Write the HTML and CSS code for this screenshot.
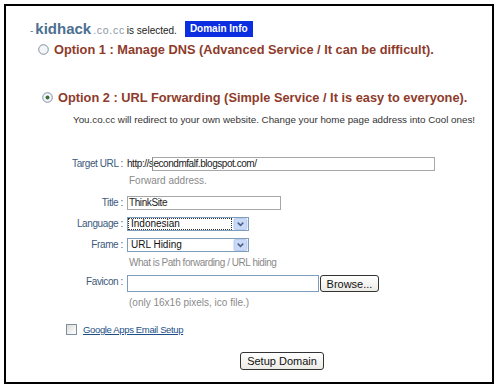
FILE: index.html
```html
<!DOCTYPE html>
<html lang="en">
<head>
    <meta charset="UTF-8">
    <title>Domain Setup</title>
    <link rel="stylesheet" href="styles.css">
</head>
<body>
    <div class="frame">
        <div class="selected">
            <span class="dash">-</span>
            <span class="domain">kidhack</span>
            <span class="tld">.co.cc</span>
            <span class="is">is selected.</span>
            <span class="badge">Domain Info</span>
        </div>

        <div class="option option-one">
            <svg class="radio" width="11" height="11" viewBox="0 0 11 11">
                <circle cx="5.5" cy="5.5" r="4.8" fill="#f4f6f8" stroke="#7f8ea3" stroke-width="1"/>
            </svg>
            <span>Option 1 : Manage DNS (Advanced Service / It can be difficult).</span>
        </div>

        <div class="option option-two">
            <svg class="radio" width="11" height="11" viewBox="0 0 11 11">
                <circle cx="5.5" cy="5.5" r="4.8" fill="#f4f6f8" stroke="#7f8ea3" stroke-width="1"/>
                <circle cx="5.5" cy="5.5" r="2" fill="#3f6b3f"/>
            </svg>
            <span>Option 2 : URL Forwarding (Simple Service / It is easy to everyone).</span>
        </div>
        <p class="desc">You.co.cc will redirect to your own website. Change your home page address into Cool ones!</p>

        <div class="form">
            <div class="label row-url">Target URL :</div>
            <div class="field row-url">
                <div class="url-box">
                    <span class="url-text">http://secondmfalf.blogspot.com/</span>
                </div>
            </div>
            <div class="label"></div>
            <div class="hint hint-url">Forward address.</div>

            <div class="label row-title">Title :</div>
            <div class="field row-title">
                <div class="textbox title-box">ThinkSite</div>
            </div>

            <div class="label row-lang">Language :</div>
            <div class="field row-lang">
                <div class="select">
                    <span class="select-value focused">Indonesian</span>
                    <svg class="arrow" width="15" height="13" viewBox="0 0 15 13">
                        <rect x="0.5" y="0.5" width="14" height="12" rx="1.5" fill="#c9d9f7" stroke="#b3c8ef"/>
                        <path d="M4.5 5 L7.5 8 L10.5 5" fill="none" stroke="#4d6185" stroke-width="1.6"/>
                    </svg>
                </div>
            </div>

            <div class="label row-frame">Frame :</div>
            <div class="field row-frame">
                <div class="select">
                    <span class="select-value">URL Hiding</span>
                    <svg class="arrow" width="15" height="13" viewBox="0 0 15 13">
                        <rect x="0.5" y="0.5" width="14" height="12" rx="1.5" fill="#c9d9f7" stroke="#b3c8ef"/>
                        <path d="M4.5 5 L7.5 8 L10.5 5" fill="none" stroke="#4d6185" stroke-width="1.6"/>
                    </svg>
                </div>
            </div>
            <div class="label"></div>
            <div class="hint hint-frame">What is Path forwarding / URL hiding</div>

            <div class="label row-fav">Favicon :</div>
            <div class="field row-fav">
                <div class="textbox file-box"></div>
                <button class="btn browse">Browse...</button>
            </div>
            <div class="label"></div>
            <div class="hint hint-fav">(only 16x16 pixels, ico file.)</div>
        </div>

        <div class="google">
            <span class="check"></span>
            <a href="#" class="google-link">Google Apps Email Setup</a>
        </div>

        <div class="submit">
            <button class="btn setup">Setup Domain</button>
        </div>
    </div>
</body>
</html>
```

FILE: styles.css
```css
body {
    margin: 0;
    background-color: #fff;
    font-family: "Liberation Sans", Arial, sans-serif;
}
.frame {
    margin: 4px 0 0 4px;
    width: 486px;
    height: 376px;
    border: 2px solid #000;
    background-color: #fff;
}
/* Header line */
.selected {
    display: flex;
    align-items: baseline;
    padding: 14px 0 0 24px;
    height: 18px;
}
.dash {
    font-size: 10px;
    color: #6b7f94;
    margin-right: 2px;
}
.domain {
    font-size: 15px;
    font-weight: bold;
    color: #4d6f91;
    margin-right: 2px;
}
.tld {
    font-size: 10.5px;
    color: #8a96a3;
    letter-spacing: 0.7px;
    margin-right: 2px;
}
.is {
    font-size: 10px;
    color: #222;
}
.badge {
    margin-left: 8px;
    background-color: #0a2ee0;
    color: #fff;
    font-size: 10px;
    font-weight: bold;
    padding: 2px 5px 3px 5px;
    align-self: center;
}
/* Options */
.option {
    display: flex;
    align-items: center;
    font-size: 12.8px;
    font-weight: bold;
    color: #8e3b2b;
}
.radio {
    margin-right: 5px;
    flex-shrink: 0;
}
.option-one {
    padding: 2px 0 0 32px;
    height: 18px;
}
.option-two {
    margin-top: 30px;
    padding-left: 36px;
    height: 18px;
}
.desc {
    margin: 8px 0 0 67px;
    font-size: 9.8px;
    color: #333;
}
/* Form grid */
.form {
    display: grid;
    grid-template-columns: 83px 1fr;
    column-gap: 4px;
    margin: 32px 0 0 34px;
    font-size: 10px;
}
.label {
    text-align: right;
    color: #3c5a7c;
    line-height: 14px;
    letter-spacing: -0.4px;
}
.field {
    display: flex;
    align-items: center;
}
.url-box {
    position: relative;
    width: 308px;
    height: 14px;
    line-height: 14px;
    color: #222;
    letter-spacing: -0.45px;
}
.url-box::after {
    content: "";
    position: absolute;
    left: 25px;
    top: 0;
    right: 0;
    bottom: 0;
    border: 1px solid #a7a7a7;
    border-left-color: #8a8a8a;
}
.hint {
    color: #8a8a8a;
    line-height: 12px;
    padding-left: 2px;
}
.hint-url {
    margin-top: 4px;
    margin-bottom: 9px;
}
.textbox {
    box-sizing: border-box;
    border: 1px solid #a7a7a7;
    background-color: #fff;
    color: #222;
    height: 14px;
    line-height: 12px;
    padding-left: 1px;
    letter-spacing: -0.4px;
}
.title-box {
    width: 154px;
}
.row-lang, .row-frame {
    margin-top: 7px;
}
.select {
    box-sizing: border-box;
    width: 122px;
    height: 14px;
    border: 1px solid #7f9db9;
    display: flex;
    align-items: center;
    justify-content: space-between;
    background-color: #fff;
    color: #111;
}
.select-value {
    line-height: 10px;
    padding: 0 2px;
    margin-left: 1px;
}
.focused {
    outline: 1px dotted #333;
    flex-grow: 1;
    margin-right: 2px;
}
.arrow {
    width: 15px;
    height: 12px;
}
.hint-frame {
    margin-top: 5px;
    margin-bottom: 6px;
    letter-spacing: -0.45px;
}
.file-box {
    width: 192px;
    height: 17px;
    border-color: #7f9db9;
}
.btn {
    box-sizing: border-box;
    font-family: "Liberation Sans", Arial, sans-serif;
    font-size: 11px;
    color: #111;
    background: linear-gradient(#ffffff, #ecebe6);
    border: 1px solid #333;
    border-radius: 3px;
    padding: 0;
    cursor: pointer;
}
.browse {
    width: 59px;
    height: 17px;
    margin-left: 1px;
}
.hint-fav {
    margin-top: 5px;
}
/* Google apps */
.google {
    display: flex;
    align-items: center;
    margin: 15px 0 0 60px;
    font-size: 9.5px;
}
.check {
    width: 9px;
    height: 9px;
    border: 1px solid #7f8ea3;
    background: linear-gradient(135deg, #dcdcd6, #ffffff);
    margin-right: 6px;
}
.google-link {
    color: #1c4f86;
    letter-spacing: -0.35px;
}
.submit {
    display: flex;
    margin: 17px 0 0 234px;
}
.setup {
    width: 84px;
    height: 18px;
}
```
